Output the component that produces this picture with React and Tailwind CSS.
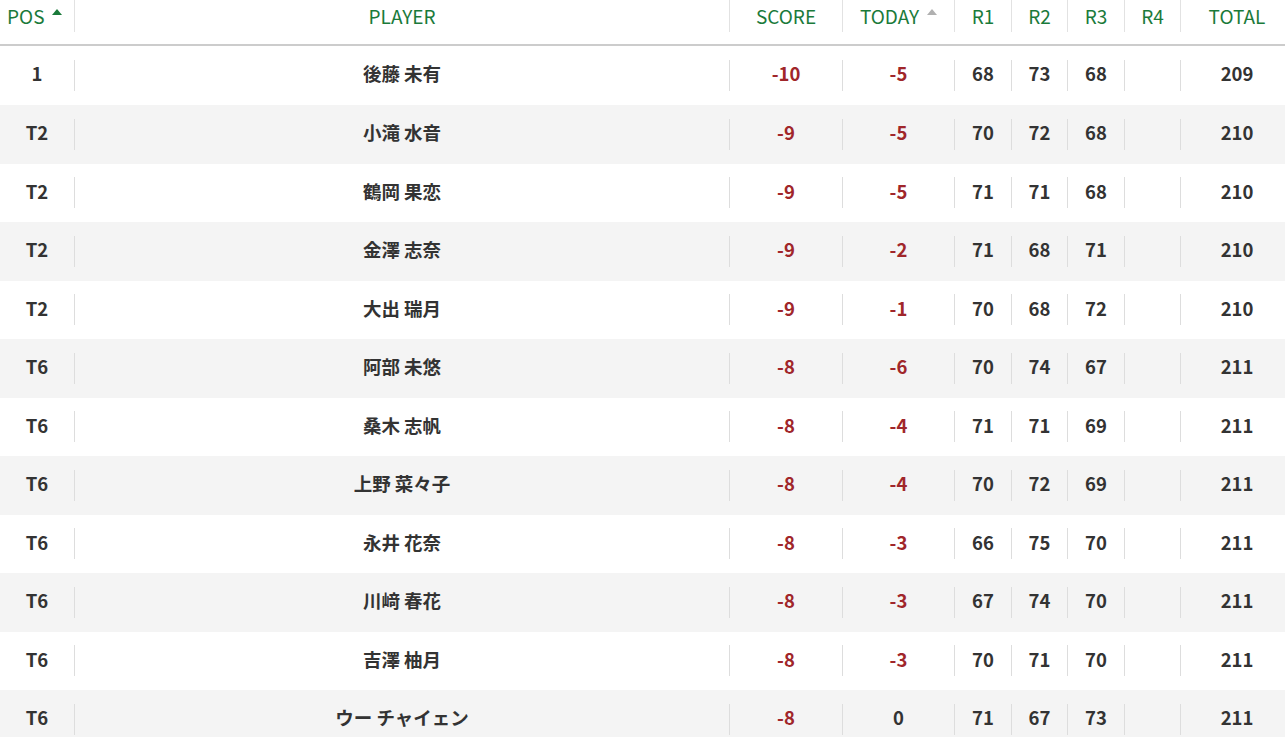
import React from 'react';

const rows = [
  ['1', '後藤 未有', '-10', '-5', '68', '73', '68', '', '209'],
  ['T2', '小滝 水音', '-9', '-5', '70', '72', '68', '', '210'],
  ['T2', '鶴岡 果恋', '-9', '-5', '71', '71', '68', '', '210'],
  ['T2', '金澤 志奈', '-9', '-2', '71', '68', '71', '', '210'],
  ['T2', '大出 瑞月', '-9', '-1', '70', '68', '72', '', '210'],
  ['T6', '阿部 未悠', '-8', '-6', '70', '74', '67', '', '211'],
  ['T6', '桑木 志帆', '-8', '-4', '71', '71', '69', '', '211'],
  ['T6', '上野 菜々子', '-8', '-4', '70', '72', '69', '', '211'],
  ['T6', '永井 花奈', '-8', '-3', '66', '75', '70', '', '211'],
  ['T6', '川﨑 春花', '-8', '-3', '67', '74', '70', '', '211'],
  ['T6', '吉澤 柚月', '-8', '-3', '70', '71', '70', '', '211'],
  ['T6', 'ウー チャイェン', '-8', '0', '71', '67', '73', '', '211'],
];

const widths = ['w-[75px]', 'w-[655px]', 'w-[113px]', 'w-[112px]', 'w-[57px]', 'w-[56px]', 'w-[57px]', 'w-[56px]', 'w-[112px]'];

const Caret = ({ active }) => (
  <span
    className={`ml-[8px] inline-block w-0 h-0 border-l-[5px] border-r-[5px] border-b-[6px] border-l-transparent border-r-transparent relative top-[-3px] ${
      active ? 'border-b-[#1a7a3a]' : 'border-b-[#b0b0b0]'
    }`}
  />
);

const headers = [
  { label: 'POS', caret: 'on' },
  { label: 'PLAYER' },
  { label: 'SCORE' },
  { label: 'TODAY', caret: 'off' },
  { label: 'R1' },
  { label: 'R2' },
  { label: 'R3' },
  { label: 'R4' },
  { label: 'TOTAL' },
];

const isRed = (v) => v.startsWith('-');

export default function App() {
  return (
    <div
      className="w-[1285px] h-[737px] overflow-hidden bg-white"
      style={{ fontFamily: '"Noto Sans CJK JP", "Noto Sans", sans-serif' }}
    >
      <div className="flex w-[1293px] h-[46px] border-b-2 border-[#cccccc]">
        {headers.map((h, i) => (
          <div key={h.label} className={`${widths[i]} shrink-0 flex items-start`}>
            <div
              className={`flex-1 h-[32px] pb-[2px] flex items-center justify-center text-[19px] text-[#1a7a3a] leading-none ${
                i < headers.length - 1 ? 'border-r border-[#e2e2e2]' : ''
              } ${i === 0 ? 'justify-start pl-[7px]' : ''}`}
            >
              <span>{h.label}</span>
              {h.caret && <Caret active={h.caret === 'on'} />}
            </div>
          </div>
        ))}
      </div>
      {rows.map((r, ri) => (
        <div
          key={ri}
          className={`flex w-[1293px] items-center ${ri === 0 ? 'h-[59px]' : 'h-[58.5px]'} ${ri % 2 === 1 ? 'bg-[#f4f4f4]' : 'bg-white'}`}
        >
          {r.map((v, ci) => (
            <div key={ci} className={`${widths[ci]} shrink-0 flex items-center`}>
              <div
                className={`flex-1 h-[31px] pb-[4px] flex items-center justify-center text-[18.5px] font-bold leading-none ${
                  ci < r.length - 1 ? 'border-r border-[#dddddd]' : ''
                } ${(ci === 2 || ci === 3) && isRed(v) ? 'text-[#a0262a]' : 'text-[#333333]'}`}
              >
                {v}
              </div>
            </div>
          ))}
        </div>
      ))}
    </div>
  );
}
